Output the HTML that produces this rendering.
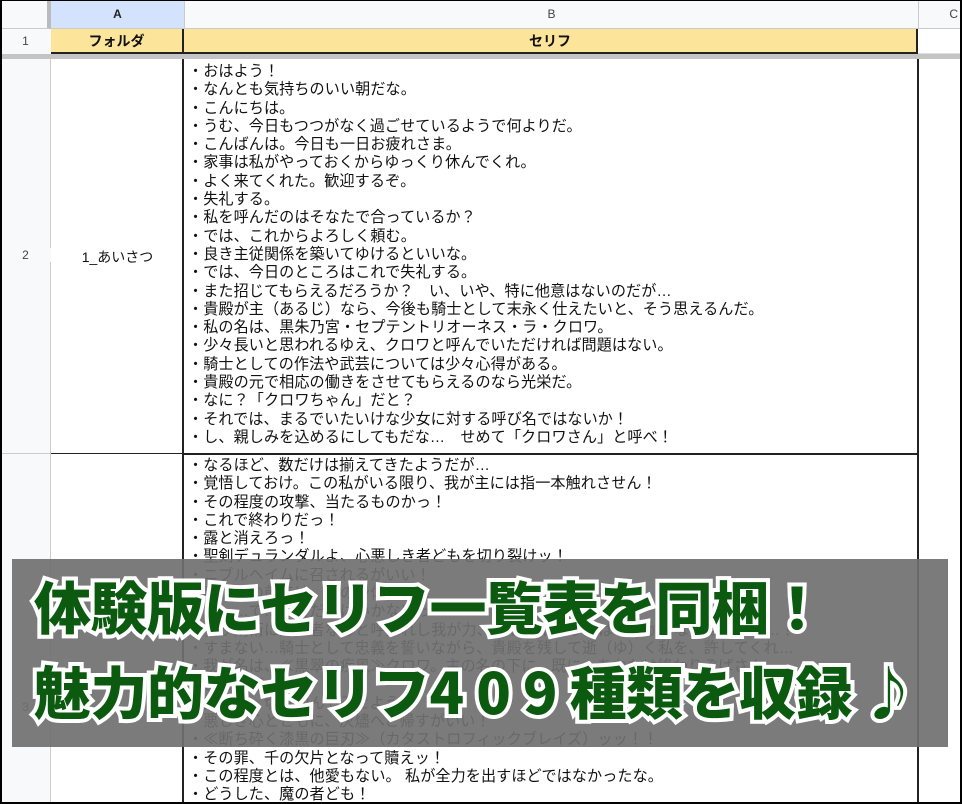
<!DOCTYPE html>
<html><head><meta charset="utf-8">
<style>
*{margin:0;padding:0;box-sizing:border-box}
html,body{width:962px;height:804px;overflow:hidden;background:#fff}
body{position:relative;font-family:"Liberation Sans","Noto Sans CJK JP",sans-serif;color:#111}
.abs{position:absolute}
.hdr{background:#f8f9fa;color:#444;font-size:12px;text-align:center}
.lines{position:absolute;left:188px;font-size:15.1px;line-height:18.3px;white-space:nowrap;letter-spacing:0.1px}
.ov{position:absolute;left:12px;top:559px;width:936px;height:188px;background:rgba(112,112,112,0.92)}
.big{position:absolute;left:34px;font-family:"Noto Sans CJK JP",sans-serif;font-weight:900;font-size:57px;line-height:1;color:#0b5a10;-webkit-text-stroke:8px #fff;paint-order:stroke fill;white-space:nowrap;letter-spacing:-0.5px}
</style></head><body>
<div class="abs hdr" style="left:0;top:0;width:51px;height:29px;border-right:4px solid #bbb;border-bottom:1px solid #ccc"></div>
<div class="abs" style="left:51px;top:0;width:133px;height:29px;background:#d3e3fd;border-bottom:1px solid #ccc;font-size:12px;font-weight:bold;text-align:center;line-height:29px;color:#222">A</div>
<div class="abs hdr" style="left:184px;top:0;width:734px;height:29px;line-height:29px;border-left:1px solid #ccc;border-bottom:1px solid #ccc">B</div>
<div class="abs hdr" style="left:918px;top:0;width:44px;height:29px;line-height:29px;border-left:1px solid #ccc;border-bottom:1px solid #ccc;text-align:right;padding-right:4px">C</div>
<div class="abs hdr" style="left:0;top:29px;width:51px;height:25px;line-height:25px">1</div>
<div class="abs" style="left:51px;top:29px;width:133px;height:25px;background:#fde49b;border-right:2px solid #222;border-bottom:2px solid #222;text-align:center;font-weight:bold;font-size:14px;line-height:24px">フォルダ</div>
<div class="abs" style="left:184px;top:29px;width:734px;height:25px;background:#fde49b;border-right:2px solid #222;border-bottom:2px solid #222;text-align:center;font-weight:bold;font-size:14px;line-height:24px">セリフ</div>
<div class="abs" style="left:918px;top:29px;width:44px;height:25px;border-bottom:1px solid #ddd"></div>
<div class="abs" style="left:0;top:54px;width:962px;height:5px;background:#c4c4c4"></div>
<div class="abs" style="left:0;top:59px;width:51px;height:745px;background:#f8f9fa;border-right:1px solid #ccc"></div>
<div class="abs" style="left:0;top:453px;width:51px;height:1px;background:#ccc"></div>
<div class="abs hdr" style="left:0;top:248px;width:51px">2</div>
<div class="abs hdr" style="left:0;top:700px;width:51px">3</div>
<div class="abs" style="left:51px;top:59px;width:133px;height:745px;border-right:2px solid #222"></div>
<div class="abs" style="left:51px;top:453px;width:133px;height:1px;background:#222"></div>
<div class="abs" style="left:51px;top:247px;width:133px;text-align:center;font-size:14px">1_あいさつ</div>
<div class="abs" style="left:184px;top:453px;width:734px;height:2px;background:#222"></div>
<div class="abs" style="left:917px;top:59px;width:2px;height:745px;background:#222"></div>
<div class="lines" style="top:63px">
・おはよう！<br>・なんとも気持ちのいい朝だな。<br>・こんにちは。<br>・うむ、今日もつつがなく過ごせているようで何よりだ。<br>・こんばんは。今日も一日お疲れさま。<br>・家事は私がやっておくからゆっくり休んでくれ。<br>・よく来てくれた。歓迎するぞ。<br>・失礼する。<br>・私を呼んだのはそなたで合っているか？<br>・では、これからよろしく頼む。<br>・良き主従関係を築いてゆけるといいな。<br>・では、今日のところはこれで失礼する。<br>・また招じてもらえるだろうか？　い、いや、特に他意はないのだが…<br>・貴殿が主（あるじ）なら、今後も騎士として末永く仕えたいと、そう思えるんだ。<br>・私の名は、黒朱乃宮・セプテントリオーネス・ラ・クロワ。<br>・少々長いと思われるゆえ、クロワと呼んでいただければ問題はない。<br>・騎士としての作法や武芸については少々心得がある。<br>・貴殿の元で相応の働きをさせてもらえるのなら光栄だ。<br>・なに？「クロワちゃん」だと？<br>・それでは、まるでいたいけな少女に対する呼び名ではないか！<br>・し、親しみを込めるにしてもだな…　せめて「クロワさん」と呼べ！
</div>
<div class="lines" style="top:457px">
・なるほど、数だけは揃えてきたようだが…<br>・覚悟しておけ。この私がいる限り、我が主には指一本触れさせん！<br>・その程度の攻撃、当たるものかっ！<br>・これで終わりだっ！<br>・露と消えろっ！<br>・聖剣デュランダルよ、心悪しき者どもを切り裂けッ！<br>・ニブルヘイムに召されるがいい！<br>・我が剣の前では、その身体よっ…<br>・くっ…で…まだだ…はいかないっ…<br>・我が剣術に並ぶ者なしと呼ばれし我が力、見せてやろうではないか…なるほどよっ…！<br>・すまない…騎士として忠義を誓いながら、貴殿を残して逝（ゆ）く私を、許してくれ…<br>・我が名は、≪黒翠の疾風≫クロワ。主の名の下に、既に…あなたは終わりぞばさん<br>・さあ、行くぞ！<br>・其の闇、切り刻んでみせよう<br>・悪しき心とともに、灰燼へと帰すがいい！<br>・≪断ち砕く漆黒の巨刃≫（カタストロフィックブレイズ）ッッ！！<br>・その罪、千の欠片となって贖えッ！<br>・この程度とは、他愛もない。 私が全力を出すほどではなかったな。<br>・どうした、魔の者ども！
</div>
<div class="ov"></div>
<div class="big" style="top:577px">体験版にセリフ一覧表を同梱！</div>
<div class="big" style="top:662px">魅力的なセリフ<span style="letter-spacing:12px">409</span>種類を収録<span style="margin-left:8px">♪</span></div>
<div class="abs" style="left:0;top:0;width:962px;height:804px;border:2px solid #000;border-top-width:1px"></div>
</body></html>
